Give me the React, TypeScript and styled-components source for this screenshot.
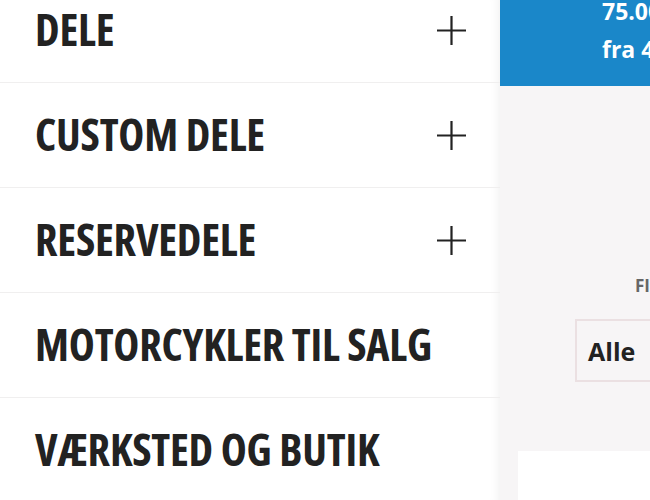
import styled, { createGlobalStyle } from "styled-components";

const GlobalStyle = createGlobalStyle`
  html, body {
    margin: 0;
    padding: 0;
    background: #ffffff;
    overflow: hidden;
  }
  * {
    box-sizing: border-box;
  }
`;

const Page = styled.div`
  display: flex;
  width: 650px;
  height: 500px;
  overflow: hidden;
`;

const Menu = styled.nav`
  width: 500px;
  flex-shrink: 0;
  background: #ffffff;
  box-shadow: inset -12px 0 12px -12px rgba(0, 0, 0, 0.08);
`;

const MenuList = styled.ul`
  list-style: none;
  margin: -22px 0 0;
  padding: 0;
`;

const MenuItem = styled.li`
  display: flex;
  align-items: center;
  justify-content: space-between;
  height: 105px;
  padding: 0 34px 2px 35px;
  border-bottom: 1px solid #f0efef;
`;

const MenuLabel = styled.span`
  font-family: "Open Sans", "DejaVu Sans", sans-serif;
  font-stretch: 75%;
  font-weight: 700;
  font-size: 44px;
  letter-spacing: -0.2px;
  color: #222222;
  text-transform: uppercase;
`;

const PlusIcon = styled.svg`
  width: 29px;
  height: 29px;
  margin-top: 3px;
  color: #222222;
`;

const Side = styled.aside`
  flex: 1;
  display: flex;
  flex-direction: column;
  background: #f7f5f6;
  overflow: hidden;
`;

const Promo = styled.div`
  flex-shrink: 0;
  height: 94px;
  margin-top: -8px;
  padding: 0 0 0 102px;
  background: #1a87c9;
  color: #ffffff;
  font-family: "Open Sans", sans-serif;
  font-weight: 700;
  font-size: 23px;
  line-height: 38px;
  white-space: nowrap;
`;

const Filter = styled.div`
  padding: 188px 0 0 75px;
  display: flex;
  flex-direction: column;
`;

const FilterLabel = styled.div`
  padding-left: 60px;
  font-family: "Open Sans", sans-serif;
  font-weight: 700;
  font-size: 17px;
  color: #666666;
  text-transform: uppercase;
  white-space: nowrap;
`;

const Select = styled.div`
  margin-top: 22px;
  width: 260px;
  height: 63px;
  display: flex;
  align-items: center;
  padding-left: 11px;
  border: 2px solid #ebe0e2;
  font-family: "Open Sans", sans-serif;
  font-weight: 700;
  font-size: 25px;
  color: #222222;
`;

const Card = styled.div`
  flex-shrink: 0;
  margin: 69px 0 0 18px;
  height: 200px;
  background: #ffffff;
`;

const items = [
  { label: "Dele", expandable: true },
  { label: "Custom dele", expandable: true },
  { label: "Reservedele", expandable: true },
  { label: "Motorcykler til salg", expandable: false },
  { label: "Værksted og butik", expandable: false },
];

function Plus() {
  return (
    <PlusIcon viewBox="0 0 29 29" fill="none" stroke="currentColor" strokeWidth="2.2">
      <path d="M14.5 0v29M0 14.5h29" />
    </PlusIcon>
  );
}

export default function App() {
  return (
    <>
      <GlobalStyle />
      <Page>
        <Menu>
          <MenuList>
            {items.map((item) => (
              <MenuItem key={item.label}>
                <MenuLabel>{item.label}</MenuLabel>
                {item.expandable && <Plus />}
              </MenuItem>
            ))}
          </MenuList>
        </Menu>
        <Side>
          <Promo>
            <div>75.000 kr.</div>
            <div>fra 495 kr./md.</div>
          </Promo>
          <Filter>
            <FilterLabel>Filtrer</FilterLabel>
            <Select>Alle</Select>
          </Filter>
          <Card />
        </Side>
      </Page>
    </>
  );
}
